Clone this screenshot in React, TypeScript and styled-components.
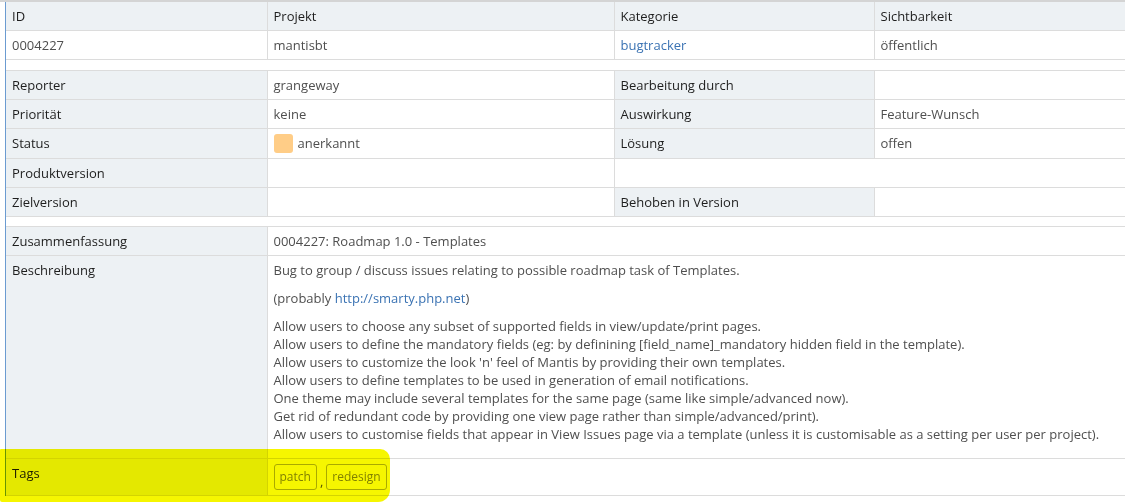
import styled, { createGlobalStyle } from 'styled-components';

const GlobalStyle = createGlobalStyle`
  html, body {
    margin: 0;
    padding: 0;
    background: #fff;
  }

  body {
    font-family: "Open Sans", "Noto Sans", sans-serif;
    font-size: 13px;
    color: #333;
  }
`;

const Page = styled.div`
  position: relative;
  width: 1125px;
  height: 504px;
  overflow: hidden;
  border-top: 2px solid #d4d4d4;
  padding-left: 5px;
  box-sizing: border-box;
`;

const Frame = styled.div`
  border-left: 1px solid #6b9bd1;
  width: 1140px;
`;

const Table = styled.table`
  width: 100%;
  table-layout: fixed;
  border-collapse: collapse;
`;

const Row = styled.tr``;

const HeadCell = styled.th`
  background: #edf1f4;
  color: #1e1e1e;
  font-weight: 400;
  text-align: left;
  padding: 5px 6px 5px;
  line-height: 18px;
  border: 1px solid #dcdcdc;
  border-top: none;
  border-left: none;
`;

const Label = styled.td`
  background: #edf1f4;
  color: #1e1e1e;
  padding: 5px 6px;
  line-height: 18px;
  vertical-align: top;
  border: 1px solid #dcdcdc;
  border-left: none;
`;

const Value = styled.td<{ $link?: boolean }>`
  background: #fff;
  color: ${(p) => (p.$link ? '#3b73b3' : '#4f4f4f')};
  padding: 5px 6px;
  line-height: 18px;
  vertical-align: top;
  border: 1px solid #dcdcdc;
  border-left: none;
`;

const Spacer = styled.td<{ $h: number }>`
  height: ${(p) => p.$h}px;
  padding: 0;
  border-top: 1px solid #dcdcdc;
  border-bottom: 1px solid #dcdcdc;
`;

const StatusSwatch = styled.span`
  display: inline-block;
  width: 19px;
  height: 19px;
  border-radius: 3px;
  background: #ffcd87;
  vertical-align: -5px;
  margin-right: 5px;
`;

const Link = styled.a`
  color: #3b73b3;
  text-decoration: none;
`;

const Para = styled.p`
  margin: 0 0 10px;
`;

const TagList = styled.div`
  display: flex;
  align-items: flex-end;
  gap: 3px;
  color: #555;
`;

const Tag = styled.span`
  display: inline-block;
  height: 24px;
  line-height: 24px;
  padding: 0 5px;
  border: 1px solid #b0b0a0;
  border-radius: 3px;
  color: #86866a;
  font-size: 12px;
`;

const Highlight = styled.div`
  position: absolute;
  left: 0;
  top: 447px;
  width: 390px;
  height: 53px;
  background: #f6f600;
  mix-blend-mode: multiply;
  border-radius: 1px 10px 12px 2px;
  pointer-events: none;
`;

const description = [
  'Allow users to choose any subset of supported fields in view/update/print pages.',
  'Allow users to define the mandatory fields (eg: by definining [field_name]_mandatory hidden field in the template).',
  "Allow users to customize the look 'n' feel of Mantis by providing their own templates.",
  'Allow users to define templates to be used in generation of email notifications.',
  'One theme may include several templates for the same page (same like simple/advanced now).',
  'Get rid of redundant code by providing one view page rather than simple/advanced/print).',
  'Allow users to customise fields that appear in View Issues page via a template (unless it is customisable as a setting per user per project).',
];

function App() {
  return (
    <>
      <GlobalStyle />
      <Page>
        <Frame>
          <Table>
            <colgroup>
              <col style={{ width: 261 }} />
              <col style={{ width: 347 }} />
              <col style={{ width: 260 }} />
              <col />
            </colgroup>
            <thead>
              <Row>
                <HeadCell>ID</HeadCell>
                <HeadCell>Projekt</HeadCell>
                <HeadCell>Kategorie</HeadCell>
                <HeadCell>Sichtbarkeit</HeadCell>
              </Row>
            </thead>
            <tbody>
              <Row>
                <Value>0004227</Value>
                <Value>mantisbt</Value>
                <Value $link>bugtracker</Value>
                <Value>öffentlich</Value>
              </Row>
              <Row>
                <Spacer colSpan={4} $h={10} />
              </Row>
              <Row>
                <Label>Reporter</Label>
                <Value>grangeway</Value>
                <Label>Bearbeitung durch</Label>
                <Value />
              </Row>
              <Row>
                <Label>Priorität</Label>
                <Value>keine</Value>
                <Label>Auswirkung</Label>
                <Value>Feature-Wunsch</Value>
              </Row>
              <Row>
                <Label>Status</Label>
                <Value>
                  <StatusSwatch />
                  anerkannt
                </Value>
                <Label>Lösung</Label>
                <Value>offen</Value>
              </Row>
              <Row>
                <Label>Produktversion</Label>
                <Value />
                <Value colSpan={2} />
              </Row>
              <Row>
                <Label>Zielversion</Label>
                <Value />
                <Label>Behoben in Version</Label>
                <Value />
              </Row>
              <Row>
                <Spacer colSpan={4} $h={9} />
              </Row>
              <Row>
                <Label>Zusammenfassung</Label>
                <Value colSpan={3}>0004227: Roadmap 1.0 - Templates</Value>
              </Row>
              <Row>
                <Label>Beschreibung</Label>
                <Value colSpan={3}>
                  <Para>Bug to group / discuss issues relating to possible roadmap task of Templates.</Para>
                  <Para>
                    (probably <Link href="#">http://smarty.php.net</Link>)
                  </Para>
                  <Para>
                    {description.map((line) => (
                      <span key={line}>
                        {line}
                        <br />
                      </span>
                    ))}
                  </Para>
                </Value>
              </Row>
              <Row>
                <Label>Tags</Label>
                <Value colSpan={3}>
                  <TagList>
                    <Tag>patch</Tag>,<Tag>redesign</Tag>
                  </TagList>
                </Value>
              </Row>
            </tbody>
          </Table>
        </Frame>
        <Highlight />
      </Page>
    </>
  );
}

export default App;
